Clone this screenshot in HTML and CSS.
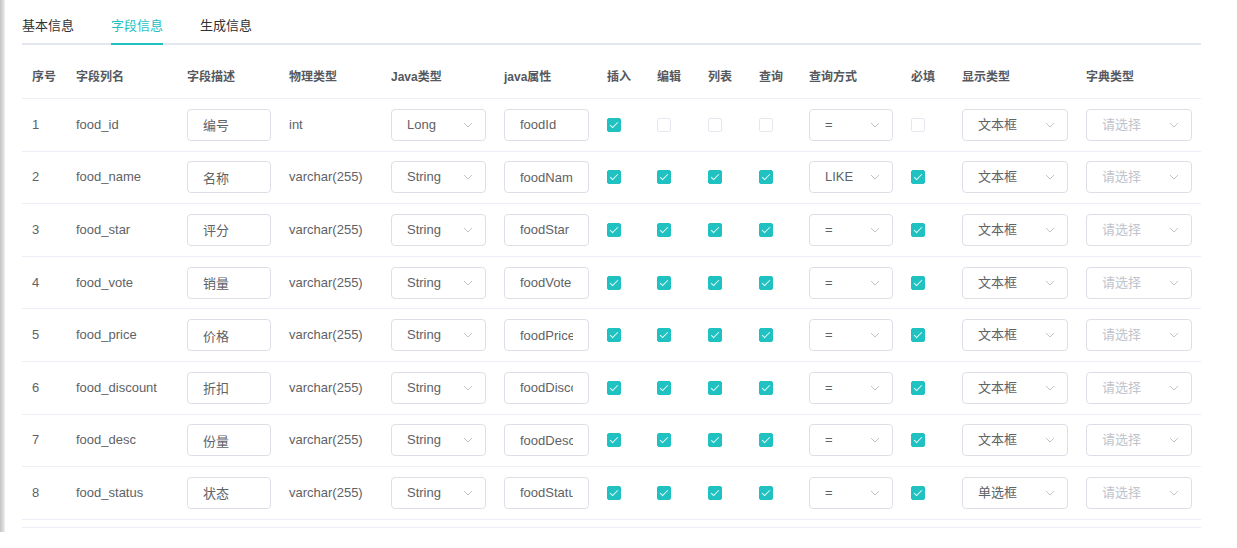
FILE: index.html
```html
<!DOCTYPE html>
<html lang="zh-CN">
<head>
<meta charset="utf-8">
<title>字段信息</title>
<link rel="stylesheet" href="styles.css">
</head>
<body>
<div class="page">
  <div class="edge"></div>
  <div class="main">
    <div class="tabs">
      <div class="tab">基本信息</div>
      <div class="tab active">字段信息</div>
      <div class="tab">生成信息</div>
    </div>

    <div class="grid">
      <div class="row head">
        <div class="c">序号</div><div class="c">字段列名</div><div class="c">字段描述</div><div class="c">物理类型</div>
        <div class="c">Java类型</div><div class="c">java属性</div><div class="c">插入</div><div class="c">编辑</div>
        <div class="c">列表</div><div class="c">查询</div><div class="c">查询方式</div><div class="c">必填</div>
        <div class="c">显示类型</div><div class="c">字典类型</div>
      </div>

      <div class="row">
        <div class="c">1</div><div class="c">food_id</div>
        <div class="c"><input class="inp" value="编号" readonly></div>
        <div class="c">int</div>
        <div class="c"><div class="sel"><span>Long</span><svg class="arr" viewBox="0 0 10 6"><polyline points="1,1 5,5 9,1"/></svg></div></div>
        <div class="c"><input class="inp" value="foodId" readonly></div>
        <div class="c"><span class="cb on"></span></div><div class="c"><span class="cb"></span></div>
        <div class="c"><span class="cb"></span></div><div class="c"><span class="cb"></span></div>
        <div class="c"><div class="sel"><span>=</span><svg class="arr" viewBox="0 0 10 6"><polyline points="1,1 5,5 9,1"/></svg></div></div>
        <div class="c"><span class="cb"></span></div>
        <div class="c"><div class="sel"><span>文本框</span><svg class="arr" viewBox="0 0 10 6"><polyline points="1,1 5,5 9,1"/></svg></div></div>
        <div class="c"><div class="sel ph"><span>请选择</span><svg class="arr" viewBox="0 0 10 6"><polyline points="1,1 5,5 9,1"/></svg></div></div>
      </div>

      <div class="row">
        <div class="c">2</div><div class="c">food_name</div>
        <div class="c"><input class="inp" value="名称" readonly></div>
        <div class="c">varchar(255)</div>
        <div class="c"><div class="sel"><span>String</span><svg class="arr" viewBox="0 0 10 6"><polyline points="1,1 5,5 9,1"/></svg></div></div>
        <div class="c"><input class="inp" value="foodName" readonly></div>
        <div class="c"><span class="cb on"></span></div><div class="c"><span class="cb on"></span></div>
        <div class="c"><span class="cb on"></span></div><div class="c"><span class="cb on"></span></div>
        <div class="c"><div class="sel"><span>LIKE</span><svg class="arr" viewBox="0 0 10 6"><polyline points="1,1 5,5 9,1"/></svg></div></div>
        <div class="c"><span class="cb on"></span></div>
        <div class="c"><div class="sel"><span>文本框</span><svg class="arr" viewBox="0 0 10 6"><polyline points="1,1 5,5 9,1"/></svg></div></div>
        <div class="c"><div class="sel ph"><span>请选择</span><svg class="arr" viewBox="0 0 10 6"><polyline points="1,1 5,5 9,1"/></svg></div></div>
      </div>

      <div class="row">
        <div class="c">3</div><div class="c">food_star</div>
        <div class="c"><input class="inp" value="评分" readonly></div>
        <div class="c">varchar(255)</div>
        <div class="c"><div class="sel"><span>String</span><svg class="arr" viewBox="0 0 10 6"><polyline points="1,1 5,5 9,1"/></svg></div></div>
        <div class="c"><input class="inp" value="foodStar" readonly></div>
        <div class="c"><span class="cb on"></span></div><div class="c"><span class="cb on"></span></div>
        <div class="c"><span class="cb on"></span></div><div class="c"><span class="cb on"></span></div>
        <div class="c"><div class="sel"><span>=</span><svg class="arr" viewBox="0 0 10 6"><polyline points="1,1 5,5 9,1"/></svg></div></div>
        <div class="c"><span class="cb on"></span></div>
        <div class="c"><div class="sel"><span>文本框</span><svg class="arr" viewBox="0 0 10 6"><polyline points="1,1 5,5 9,1"/></svg></div></div>
        <div class="c"><div class="sel ph"><span>请选择</span><svg class="arr" viewBox="0 0 10 6"><polyline points="1,1 5,5 9,1"/></svg></div></div>
      </div>

      <div class="row">
        <div class="c">4</div><div class="c">food_vote</div>
        <div class="c"><input class="inp" value="销量" readonly></div>
        <div class="c">varchar(255)</div>
        <div class="c"><div class="sel"><span>String</span><svg class="arr" viewBox="0 0 10 6"><polyline points="1,1 5,5 9,1"/></svg></div></div>
        <div class="c"><input class="inp" value="foodVote" readonly></div>
        <div class="c"><span class="cb on"></span></div><div class="c"><span class="cb on"></span></div>
        <div class="c"><span class="cb on"></span></div><div class="c"><span class="cb on"></span></div>
        <div class="c"><div class="sel"><span>=</span><svg class="arr" viewBox="0 0 10 6"><polyline points="1,1 5,5 9,1"/></svg></div></div>
        <div class="c"><span class="cb on"></span></div>
        <div class="c"><div class="sel"><span>文本框</span><svg class="arr" viewBox="0 0 10 6"><polyline points="1,1 5,5 9,1"/></svg></div></div>
        <div class="c"><div class="sel ph"><span>请选择</span><svg class="arr" viewBox="0 0 10 6"><polyline points="1,1 5,5 9,1"/></svg></div></div>
      </div>

      <div class="row">
        <div class="c">5</div><div class="c">food_price</div>
        <div class="c"><input class="inp" value="价格" readonly></div>
        <div class="c">varchar(255)</div>
        <div class="c"><div class="sel"><span>String</span><svg class="arr" viewBox="0 0 10 6"><polyline points="1,1 5,5 9,1"/></svg></div></div>
        <div class="c"><input class="inp" value="foodPrice" readonly></div>
        <div class="c"><span class="cb on"></span></div><div class="c"><span class="cb on"></span></div>
        <div class="c"><span class="cb on"></span></div><div class="c"><span class="cb on"></span></div>
        <div class="c"><div class="sel"><span>=</span><svg class="arr" viewBox="0 0 10 6"><polyline points="1,1 5,5 9,1"/></svg></div></div>
        <div class="c"><span class="cb on"></span></div>
        <div class="c"><div class="sel"><span>文本框</span><svg class="arr" viewBox="0 0 10 6"><polyline points="1,1 5,5 9,1"/></svg></div></div>
        <div class="c"><div class="sel ph"><span>请选择</span><svg class="arr" viewBox="0 0 10 6"><polyline points="1,1 5,5 9,1"/></svg></div></div>
      </div>

      <div class="row">
        <div class="c">6</div><div class="c">food_discount</div>
        <div class="c"><input class="inp" value="折扣" readonly></div>
        <div class="c">varchar(255)</div>
        <div class="c"><div class="sel"><span>String</span><svg class="arr" viewBox="0 0 10 6"><polyline points="1,1 5,5 9,1"/></svg></div></div>
        <div class="c"><input class="inp" value="foodDiscount" readonly></div>
        <div class="c"><span class="cb on"></span></div><div class="c"><span class="cb on"></span></div>
        <div class="c"><span class="cb on"></span></div><div class="c"><span class="cb on"></span></div>
        <div class="c"><div class="sel"><span>=</span><svg class="arr" viewBox="0 0 10 6"><polyline points="1,1 5,5 9,1"/></svg></div></div>
        <div class="c"><span class="cb on"></span></div>
        <div class="c"><div class="sel"><span>文本框</span><svg class="arr" viewBox="0 0 10 6"><polyline points="1,1 5,5 9,1"/></svg></div></div>
        <div class="c"><div class="sel ph"><span>请选择</span><svg class="arr" viewBox="0 0 10 6"><polyline points="1,1 5,5 9,1"/></svg></div></div>
      </div>

      <div class="row">
        <div class="c">7</div><div class="c">food_desc</div>
        <div class="c"><input class="inp" value="份量" readonly></div>
        <div class="c">varchar(255)</div>
        <div class="c"><div class="sel"><span>String</span><svg class="arr" viewBox="0 0 10 6"><polyline points="1,1 5,5 9,1"/></svg></div></div>
        <div class="c"><input class="inp" value="foodDesc" readonly></div>
        <div class="c"><span class="cb on"></span></div><div class="c"><span class="cb on"></span></div>
        <div class="c"><span class="cb on"></span></div><div class="c"><span class="cb on"></span></div>
        <div class="c"><div class="sel"><span>=</span><svg class="arr" viewBox="0 0 10 6"><polyline points="1,1 5,5 9,1"/></svg></div></div>
        <div class="c"><span class="cb on"></span></div>
        <div class="c"><div class="sel"><span>文本框</span><svg class="arr" viewBox="0 0 10 6"><polyline points="1,1 5,5 9,1"/></svg></div></div>
        <div class="c"><div class="sel ph"><span>请选择</span><svg class="arr" viewBox="0 0 10 6"><polyline points="1,1 5,5 9,1"/></svg></div></div>
      </div>

      <div class="row">
        <div class="c">8</div><div class="c">food_status</div>
        <div class="c"><input class="inp" value="状态" readonly></div>
        <div class="c">varchar(255)</div>
        <div class="c"><div class="sel"><span>String</span><svg class="arr" viewBox="0 0 10 6"><polyline points="1,1 5,5 9,1"/></svg></div></div>
        <div class="c"><input class="inp" value="foodStatus" readonly></div>
        <div class="c"><span class="cb on"></span></div><div class="c"><span class="cb on"></span></div>
        <div class="c"><span class="cb on"></span></div><div class="c"><span class="cb on"></span></div>
        <div class="c"><div class="sel"><span>=</span><svg class="arr" viewBox="0 0 10 6"><polyline points="1,1 5,5 9,1"/></svg></div></div>
        <div class="c"><span class="cb on"></span></div>
        <div class="c"><div class="sel"><span>单选框</span><svg class="arr" viewBox="0 0 10 6"><polyline points="1,1 5,5 9,1"/></svg></div></div>
        <div class="c"><div class="sel ph"><span>请选择</span><svg class="arr" viewBox="0 0 10 6"><polyline points="1,1 5,5 9,1"/></svg></div></div>
      </div>
    </div>
    <div class="grid-foot"></div>
  </div>
</div>
</body>
</html>
```

FILE: styles.css
```css
html, body {
  margin: 0;
  padding: 0;
  background: #ffffff;
}

body {
  font-family: "Liberation Sans", "Noto Sans CJK SC", sans-serif;
  color: #606266;
  font-size: 13px;
}

.page {
  display: flex;
  align-items: flex-start;
}

.edge {
  width: 5px;
  height: 532px;
  flex: none;
  background: linear-gradient(to right, #c4c4c4 0, #d2d2d2 2px, #e4e4e4 4px, #f3f3f3 5px);
}

.main {
  width: 1179px;
  margin-left: 17px;
}

/* tabs */
.tabs {
  display: flex;
  height: 43px;
  border-bottom: 2px solid #e4e7ed;
}

.tab {
  position: relative;
  padding: 16px 18.5px 0;
  line-height: 20px;
  font-size: 13px;
  color: #303133;
}

.tab:first-child {
  padding-left: 0;
}

.tab.active {
  color: #1fc1c1;
}

.tab.active::after {
  content: "";
  position: absolute;
  left: 18.5px;
  right: 18.5px;
  bottom: -2px;
  height: 2px;
  background: #1fc1c1;
}

/* grid table */
.grid {
  margin-top: 11px;
}

.row {
  display: grid;
  grid-template-columns: 44px 111px 102px 102px 113px 103px 50px 51px 51px 50px 102px 51px 124px 124px;
  align-items: center;
  box-sizing: border-box;
  height: 52.6px;
  border-bottom: 1px solid #ebeef5;
}

.row.head {
  height: 43px;
  font-size: 12px;
  font-weight: bold;
  color: #55585e;
}

.c {
  padding: 0 8px 0 10px;
  min-width: 0;
  white-space: nowrap;
  overflow: hidden;
  line-height: 20px;
}

.grid-foot {
  height: 7px;
  border-bottom: 1px solid #ebeef5;
}

/* inputs */
.inp {
  display: block;
  box-sizing: border-box;
  width: 100%;
  height: 32px;
  margin: 0;
  padding: 0 15px;
  border: 1px solid #dcdfe6;
  border-radius: 4px;
  background: #fff;
  font-family: "Liberation Sans", "Noto Sans CJK SC", sans-serif;
  font-size: 13px;
  color: #606266;
  outline: none;
}

.sel {
  display: flex;
  align-items: center;
  box-sizing: border-box;
  width: 100%;
  height: 32px;
  padding: 0 12px 0 15px;
  border: 1px solid #dcdfe6;
  border-radius: 4px;
  background: #fff;
  color: #606266;
}

.sel span {
  flex: 1;
  overflow: hidden;
}

.sel.ph span {
  color: #c0c4cc;
}

.arr {
  width: 10px;
  height: 6px;
  flex: none;
  fill: none;
  stroke: #c0c4cc;
  stroke-width: 1;
}

/* checkbox */
.cb {
  display: block;
  position: relative;
  box-sizing: border-box;
  width: 14px;
  height: 14px;
  border: 1px solid #e4e7ed;
  border-radius: 2px;
  background: #fff;
}

.cb.on {
  background: #1fc1c1;
  border-color: #1fc1c1;
}

.cb.on::after {
  content: "";
  position: absolute;
  left: 4px;
  top: 1px;
  width: 3px;
  height: 7px;
  border: 1px solid #e8fafa;
  border-top: 0;
  border-left: 0;
  transform: rotate(45deg);
}
```
